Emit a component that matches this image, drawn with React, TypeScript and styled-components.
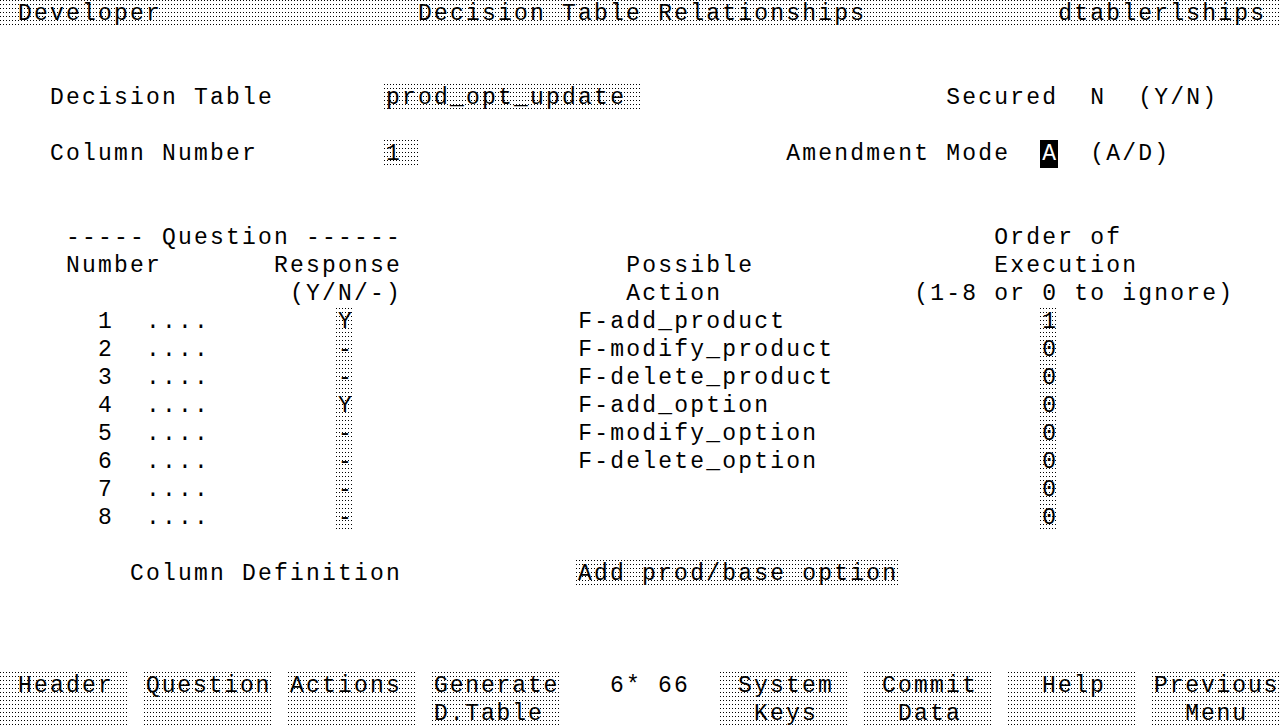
import React from 'react';
import styled, { createGlobalStyle, css } from 'styled-components';

const GlobalStyle = createGlobalStyle`
  html, body { margin: 0; padding: 0; background: #fff; }
  body { width: 1280px; height: 726px; overflow: hidden; }
`;

const stipple = css`
  background-color: #fff;
  background-image: conic-gradient(at 1px 1px, transparent 0deg 270deg, #000 270deg 360deg);
  background-size: 3px 4px;
`;

const Screen = styled.div`
  width: 1280px;
  height: 726px;
  overflow: hidden;
  display: flex;
  flex-direction: column;
  font-family: "Liberation Mono", "DejaVu Sans Mono", monospace;
  font-size: 23px;
  letter-spacing: 2.2px;
  line-height: 28px;
  color: #000;
  white-space: pre;
`;

const Line = styled.div<{ $stippled?: boolean }>`
  height: 28px;
  flex: none;
  padding-left: 2px;
  ${(p) => p.$stippled && stipple}
`;

const cell = css`
  display: inline-block;
  height: 28px;
  vertical-align: top;
  margin-left: -2px;
  padding-left: 2px;
`;

const Field = styled.span`
  ${cell}
  ${stipple}
`;

const Inverse = styled.span`
  ${cell}
  background: #000;
  color: #fff;
`;

const KeyBar = styled.div`
  display: flex;
  gap: 16px;
  height: 56px;
  flex: none;
`;

const Key = styled.div<{ $lit?: boolean }>`
  width: 128px;
  height: 56px;
  box-sizing: border-box;
  padding-left: 2px;
  display: flex;
  flex-direction: column;
  ${(p) => p.$lit && stipple}
`;

const KeyLine = styled.div<{ $tight?: boolean }>`
  height: 28px;
  letter-spacing: ${(p) => (p.$tight ? '1.85px' : '2.2px')};
`;

type Seg = { col: number; text: string; kind?: 'field' | 'inverse' };

function renderSegs(segs: Seg[]) {
  const out: React.ReactNode[] = [];
  let cur = 0;
  segs.forEach((s, i) => {
    if (s.col > cur) out.push(' '.repeat(s.col - cur));
    if (s.kind === 'field') out.push(<Field key={i}>{s.text}</Field>);
    else if (s.kind === 'inverse') out.push(<Inverse key={i}>{s.text}</Inverse>);
    else out.push(s.text);
    cur = s.col + s.text.length;
  });
  return out;
}

const questions = [
  { n: '1', resp: 'Y', action: 'F-add_product', order: '1' },
  { n: '2', resp: '-', action: 'F-modify_product', order: '0' },
  { n: '3', resp: '-', action: 'F-delete_product', order: '0' },
  { n: '4', resp: 'Y', action: 'F-add_option', order: '0' },
  { n: '5', resp: '-', action: 'F-modify_option', order: '0' },
  { n: '6', resp: '-', action: 'F-delete_option', order: '0' },
  { n: '7', resp: '-', action: '', order: '0' },
  { n: '8', resp: '-', action: '', order: '0' },
];

const rows: Seg[][] = [
  [],
  [],
  [
    { col: 3, text: 'Decision Table' },
    { col: 24, text: 'prod_opt_update ', kind: 'field' },
    { col: 59, text: 'Secured' },
    { col: 68, text: 'N' },
    { col: 71, text: '(Y/N)' },
  ],
  [],
  [
    { col: 3, text: 'Column Number' },
    { col: 24, text: '1 ', kind: 'field' },
    { col: 49, text: 'Amendment Mode' },
    { col: 65, text: 'A', kind: 'inverse' },
    { col: 68, text: '(A/D)' },
  ],
  [],
  [],
  [
    { col: 4, text: '----- Question ------' },
    { col: 62, text: 'Order of' },
  ],
  [
    { col: 4, text: 'Number' },
    { col: 17, text: 'Response' },
    { col: 39, text: 'Possible' },
    { col: 62, text: 'Execution' },
  ],
  [
    { col: 18, text: '(Y/N/-)' },
    { col: 39, text: 'Action' },
    { col: 57, text: '(1-8 or 0 to ignore)' },
  ],
  ...questions.map((q) => {
    const segs: Seg[] = [
      { col: 6, text: q.n },
      { col: 9, text: '....' },
      { col: 21, text: q.resp, kind: 'field' },
    ];
    if (q.action) segs.push({ col: 36, text: q.action });
    segs.push({ col: 65, text: q.order, kind: 'field' });
    return segs;
  }),
  [],
  [
    { col: 8, text: 'Column Definition' },
    { col: 36, text: 'Add prod/base option', kind: 'field' },
  ],
  [],
  [],
  [],
];

const keys: { lit: boolean; tight?: boolean; lines: [string, string] }[] = [
  { lit: true, lines: [' Header', ''] },
  { lit: true, tight: true, lines: ['Question', ''] },
  { lit: true, lines: ['Actions', ''] },
  { lit: true, tight: true, lines: ['Generate', 'D.Table'] },
  { lit: false, lines: ['  6* 66', ''] },
  { lit: true, lines: [' System', '  Keys'] },
  { lit: true, lines: [' Commit', '  Data'] },
  { lit: true, lines: ['  Help', ''] },
  { lit: true, tight: true, lines: ['Previous', '  Menu'] },
];

export default function App() {
  return (
    <>
      <GlobalStyle />
      <Screen>
        <Line $stippled>
          {renderSegs([
            { col: 1, text: 'Developer' },
            { col: 26, text: 'Decision Table Relationships' },
            { col: 66, text: 'dtablerlships' },
          ])}
        </Line>
        {rows.map((segs, i) => (
          <Line key={i}>{renderSegs(segs)}</Line>
        ))}
        <KeyBar>
          {keys.map((k, i) => (
            <Key key={i} $lit={k.lit}>
              <KeyLine $tight={k.tight}>{k.lines[0]}</KeyLine>
              <KeyLine $tight={k.tight}>{k.lines[1]}</KeyLine>
            </Key>
          ))}
        </KeyBar>
      </Screen>
    </>
  );
}
